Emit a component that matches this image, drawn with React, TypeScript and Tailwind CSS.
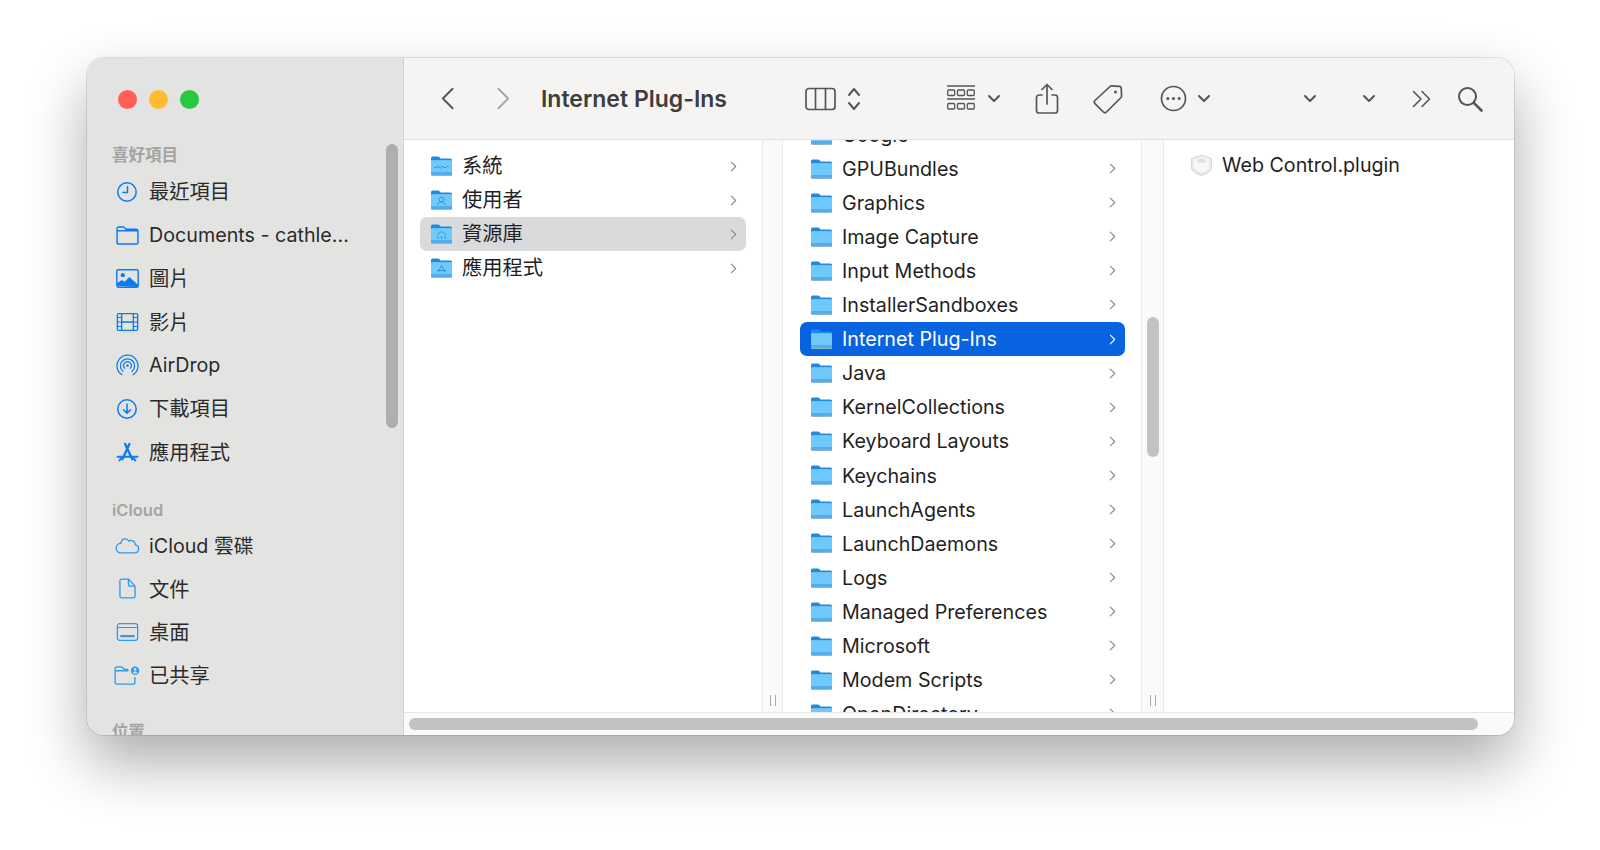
import type { ReactNode } from 'react';

const FONT = 'font-["Inter","Noto_Sans_CJK_TC",sans-serif]';

// CJK labels sit a little larger than latin ones in the reference
const labelSize = (label: string) => (/^[\u4e00-\u9fff]+$/.test(label) ? 'text-[20.3px]' : 'text-[19.7px]');

const Clock = () => (
    <svg viewBox="0 0 22 22" className="h-[22px] w-[22px]" fill="none" stroke="currentColor" strokeWidth="1.5">
        <circle cx="11" cy="11" r="9.2" />
        <path d="M11.5 5.5v6H7" strokeLinecap="round" strokeLinejoin="round" />
    </svg>
);

const FolderLine = () => (
    <svg viewBox="0 0 24 20" className="h-[19px] w-[23px]" fill="none" stroke="currentColor" strokeWidth="1.5">
        <path d="M1 5V3a2 2 0 0 1 2-2h5l2.5 2.5H21a2 2 0 0 1 2 2V17a2 2 0 0 1-2 2H3a2 2 0 0 1-2-2V5h22" strokeLinejoin="round" />
    </svg>
);

const Photo = () => (
    <svg viewBox="0 0 24 20" className="h-[19px] w-[23px]">
        <rect x="0.75" y="0.75" width="22.5" height="18.5" rx="1.5" fill="none" stroke="currentColor" strokeWidth="1.5" />
        <circle cx="7" cy="6.5" r="2.2" fill="currentColor" />
        <path d="M1 18v-3l5-3.5 3 2 5-5 9 8v2.5z" fill="currentColor" />
    </svg>
);

const Film = () => (
    <svg viewBox="0 0 24 20" className="h-[18px] w-[23px]" fill="none" stroke="currentColor">
        <rect x="0.75" y="0.75" width="22.5" height="18.5" rx="1.2" strokeWidth="1.5" />
        <path d="M5.5 1v18M18.5 1v18M5.5 10h13" strokeWidth="1.5" />
        <path d="M1 5h4.5M1 10h4.5M1 15h4.5M18.5 5H23M18.5 10H23M18.5 15H23" strokeWidth="1.2" />
    </svg>
);

const AirDrop = () => (
    <svg viewBox="0 0 24 24" className="h-[23px] w-[23px]" fill="none" stroke="currentColor" strokeWidth="1.3" strokeLinecap="round">
        <path d="M6 21.5a11 11 0 1 1 12 0" />
        <path d="M7.2 18a7.4 7.4 0 1 1 9.6 0" />
        <path d="M9 14.8a4 4 0 1 1 6 0" />
        <circle cx="12" cy="12" r="1.3" fill="currentColor" stroke="none" />
    </svg>
);

const Download = () => (
    <svg viewBox="0 0 22 22" className="h-[22px] w-[22px]" fill="none" stroke="currentColor" strokeWidth="1.5" strokeLinecap="round" strokeLinejoin="round">
        <circle cx="11" cy="11" r="9.2" />
        <path d="M11 6v9M7.5 11.8 11 15.3l3.5-3.5" />
    </svg>
);

const AppStore = () => (
    <svg viewBox="0 0 24 22" className="h-[21px] w-[23px]" fill="none" stroke="currentColor" strokeWidth="2.4" strokeLinecap="round">
        <path d="M9.5 2 17 18M14 2 6.6 18" />
        <path d="M1.6 15.4h20.8" strokeWidth="2" />
        <path d="m3.6 19.4 1.5-2M20.2 19.4l-1.5-2" strokeWidth="2" />
    </svg>
);

const Cloud = () => (
    <svg viewBox="0 0 26 18" className="h-[17px] w-[25px]" fill="none" stroke="currentColor" strokeWidth="1.4" strokeLinejoin="round">
        <path d="M6 16.8h14.5a4.3 4.3 0 0 0 .9-8.5C21.2 4.2 17 2.4 14.4 4.4 12.6 .6 6.6 1.2 6.2 6.6 3.4 6.7 1 8.8 1 11.6c0 3 2.2 5.2 5 5.2z" />
    </svg>
);

const Doc = () => (
    <svg viewBox="0 0 18 22" className="h-[21px] w-[17px]" fill="none" stroke="currentColor" strokeWidth="1.4" strokeLinejoin="round">
        <path d="M3 1h7l7 7.5V19a2 2 0 0 1-2 2H3a2 2 0 0 1-2-2V3a2 2 0 0 1 2-2z" />
        <path d="M10 1v5.5a2 2 0 0 0 2 2h5" />
    </svg>
);

const Desktop = () => (
    <svg viewBox="0 0 24 20" className="h-[18px] w-[23px]" fill="none" stroke="currentColor">
        <rect x="0.75" y="0.75" width="22.5" height="18.5" rx="2.5" strokeWidth="1.4" />
        <path d="M1 5h22" strokeWidth="1.2" />
        <path d="M4 14.5h16" strokeWidth="2.6" />
    </svg>
);

const Shared = () => (
    <svg viewBox="0 0 27 20" className="h-[19px] w-[26px]" fill="none" stroke="currentColor" strokeWidth="1.4" strokeLinejoin="round">
        <path d="M1 5V3a2 2 0 0 1 2-2h5l2.5 2.5H15M21.8 11.5V17a2 2 0 0 1-2 2H3a2 2 0 0 1-2-2V5h14" />
        <circle cx="22" cy="5" r="4.4" fill="currentColor" stroke="none" />
        <circle cx="22" cy="3.6" r="1.4" fill="#e3e3e2" stroke="none" />
        <path d="M19.6 8c.3-1.6 1.2-2.2 2.4-2.2s2.1.6 2.4 2.2z" fill="#e3e3e2" stroke="none" />
    </svg>
);

const favorites: [ReactNode, string][] = [
    [<Clock />, '最近項目'],
    [<FolderLine />, 'Documents - cathle...'],
    [<Photo />, '圖片'],
    [<Film />, '影片'],
    [<AirDrop />, 'AirDrop'],
    [<Download />, '下載項目'],
    [<AppStore />, '應用程式'],
];

const icloud: [ReactNode, string][] = [
    [<Cloud />, 'iCloud 雲碟'],
    [<Doc />, '文件'],
    [<Desktop />, '桌面'],
    [<Shared />, '已共享'],
];

const SidebarRow = ({ icon, label, tint }: { icon: ReactNode; label: string; tint: string }) => (
    <div className="flex h-[43.4px] items-center">
        <span className={`flex w-[30px] justify-center ${tint}`}>{icon}</span>
        <span className={`ml-[7px] mt-[2px] whitespace-nowrap text-[#2b2b2b] ${labelSize(label)}`}>{label}</span>
    </div>
);

const Folder = ({ glyph }: { glyph?: ReactNode }) => (
    <svg viewBox="0 0 23 22" className="h-[22px] w-[23px] shrink-0">
        <path d="M1 19.5V3a1.5 1.5 0 0 1 1.5-1.5h5.4c.6 0 1 .2 1.4.6l1.2 1.4h10A1.5 1.5 0 0 1 22 5v14.5z" fill="#1f8ae0" />
        <rect x="1" y="5.6" width="21" height="15.4" rx="1.2" fill="#b4b4b4" />
        <rect x="1" y="5.2" width="21" height="15" rx="1.2" fill="#6fc9fc" />
        <path d="M1 17h21v2a1.2 1.2 0 0 1-1.2 1.2H2.2A1.2 1.2 0 0 1 1 19z" fill="#54ace8" />
        {glyph}
    </svg>
);

const SysGlyph = (
    <path d="M4 12.5h3l1.2-1.5 2 2.5 2-2.5 1.3 1.5h2.5M16.5 11.5h2" fill="none" stroke="#2c86cf" strokeWidth="0.8" />
);
const UserGlyph = (
    <g fill="none" stroke="#2c86cf" strokeWidth="0.8">
        <circle cx="11.5" cy="10.5" r="2.4" />
        <path d="M7.5 16c.6-2 2.2-3 4-3s3.4 1 4 3" />
    </g>
);
const LibGlyph = (
    <path d="M7 11.5 11.5 8.5 16 11.5M8 13v3M11.5 13v3M15 13v3" fill="none" stroke="#2c86cf" strokeWidth="0.8" />
);
const AppGlyph = <path d="M11.5 8.5 8 15.5M11.5 8.5 15 15.5M7 13.5h9" fill="none" stroke="#2c86cf" strokeWidth="0.8" />;

const Chevron = ({ className }: { className: string }) => (
    <svg viewBox="0 0 8 12" className={`h-[11px] w-[7px] shrink-0 ${className}`} fill="none" stroke="currentColor" strokeWidth="1.3" strokeLinecap="round" strokeLinejoin="round">
        <path d="m1.5 1 5 5-5 5" />
    </svg>
);

const FileRow = ({ name, glyph, state }: { name: string; glyph?: ReactNode; state?: 'active' | 'muted' }) => {
    const bg = state === 'active' ? 'bg-[#0763e0] text-white' : state === 'muted' ? 'bg-[#d9dadb] text-[#1f1f1f]' : 'text-[#1f1f1f]';
    return (
        <div className={`flex h-[34.09px] items-center rounded-[7px] pl-[10px] pr-[9px] ${bg}`}>
            <Folder glyph={glyph} />
            <span className={`ml-[9px] flex-1 whitespace-nowrap ${glyph ? '' : 'mt-[2px]'} ${labelSize(name)}`}>{name}</span>
            <Chevron className={state === 'active' ? 'text-white' : 'text-[#8c8c8c]'} />
        </div>
    );
};

const Divider = ({ width }: { width: string }) => (
    <div className={`flex shrink-0 flex-col justify-end border-x border-[#eaeaea] bg-[#fafafa] pb-[6px] ${width}`}>
        <div className="flex justify-center gap-[4px]">
            <span className="h-[11px] w-px bg-[#a8a8a8]" />
            <span className="h-[11px] w-px bg-[#a8a8a8]" />
        </div>
    </div>
);

const Caret = ({ ml }: { ml: string }) => (
    <svg viewBox="0 0 14 9" className={`h-[9px] w-[14px] ${ml}`} fill="none" stroke="#555" strokeWidth="2" strokeLinecap="round" strokeLinejoin="round">
        <path d="m2 2 5 5 5-5" />
    </svg>
);

const Toolbar = () => (
    <div className="flex h-[82px] shrink-0 items-center border-b border-[#e3e2e0] bg-[#f5f4f2]">
        <svg viewBox="0 0 14 24" className="ml-[37px] h-[23px] w-[13px]" fill="none" stroke="#555" strokeWidth="2" strokeLinecap="round" strokeLinejoin="round">
            <path d="M12.5 1.5 2 12l10.5 10.5" />
        </svg>
        <svg viewBox="0 0 14 24" className="ml-[43px] h-[23px] w-[13px]" fill="none" stroke="#a6a6a6" strokeWidth="2" strokeLinecap="round" strokeLinejoin="round">
            <path d="M1.5 1.5 12 12 1.5 22.5" />
        </svg>
        <span className="ml-[31px] w-[187px] whitespace-nowrap pt-[1px] text-[23px] font-semibold text-[#3d3d3d]">Internet Plug-Ins</span>
        <svg viewBox="0 0 31 24" className="ml-[77px] h-[24px] w-[31px]" fill="none" stroke="#555" strokeWidth="1.7">
            <rect x="1" y="1.5" width="29" height="21" rx="3" />
            <path d="M10.5 1.5v21M20.5 1.5v21" />
        </svg>
        <svg viewBox="0 0 14 24" className="ml-[11px] h-[24px] w-[14px]" fill="none" stroke="#555" strokeWidth="2" strokeLinecap="round" strokeLinejoin="round">
            <path d="m2 8 5-6 5 6M2 16l5 6 5-6" />
        </svg>
        <svg viewBox="0 0 28 27" className="ml-[86px] h-[27px] w-[28px]" fill="none" stroke="#555" strokeWidth="1.3">
            <path d="M0 1h28M0 14h28" strokeWidth="1.5" />
            <rect x="0.7" y="5" width="7" height="5.5" rx="1" />
            <rect x="10.5" y="5" width="7" height="5.5" rx="1" />
            <rect x="20.3" y="5" width="7" height="5.5" rx="1" />
            <rect x="0.7" y="18.5" width="7" height="5.5" rx="1" />
            <rect x="10.5" y="18.5" width="7" height="5.5" rx="1" />
            <rect x="20.3" y="18.5" width="7" height="5.5" rx="1" />
        </svg>
        <Caret ml="ml-[12px]" />
        <svg viewBox="0 0 24 32" className="ml-[34px] h-[32px] w-[24px]" fill="none" stroke="#555" strokeWidth="1.7" strokeLinecap="round" strokeLinejoin="round">
            <path d="M7 12H4a2.5 2.5 0 0 0-2.5 2.5v13A2.5 2.5 0 0 0 4 30h16a2.5 2.5 0 0 0 2.5-2.5v-13A2.5 2.5 0 0 0 20 12h-3" />
            <path d="M12 21V2M7 6.5 12 1.5l5 5" />
        </svg>
        <svg viewBox="0 0 30 30" className="ml-[34px] h-[30px] w-[30px]" fill="none" stroke="#555" strokeWidth="1.7" strokeLinejoin="round">
            <path d="M17 2.5a2 2 0 0 1 1.5-.6l8 .4a1.8 1.8 0 0 1 1.7 1.7l.4 8a2 2 0 0 1-.6 1.5L13.5 28a2.2 2.2 0 0 1-3.1 0L2 19.6a2.2 2.2 0 0 1 0-3.1z" />
            <circle cx="22.5" cy="8" r="1.5" fill="#555" stroke="none" />
        </svg>
        <svg viewBox="0 0 27 27" className="ml-[37px] h-[27px] w-[27px]" fill="none" stroke="#555" strokeWidth="1.7">
            <circle cx="13.5" cy="13.5" r="12" />
            <circle cx="7.8" cy="13.5" r="1.5" fill="#555" stroke="none" />
            <circle cx="13.5" cy="13.5" r="1.5" fill="#555" stroke="none" />
            <circle cx="19.2" cy="13.5" r="1.5" fill="#555" stroke="none" />
        </svg>
        <Caret ml="ml-[10px]" />
        <Caret ml="ml-[92px]" />
        <Caret ml="ml-[45px]" />
        <svg viewBox="0 0 20 18" className="ml-[36px] h-[18px] w-[20px]" fill="none" stroke="#555" strokeWidth="1.6" strokeLinecap="round" strokeLinejoin="round">
            <path d="m1.5 1.5 7.5 7.5-7.5 7.5M10 1.5l7.5 7.5-7.5 7.5" />
        </svg>
        <svg viewBox="0 0 26 26" className="ml-[25px] h-[26px] w-[26px]" fill="none" stroke="#555" strokeWidth="2" strokeLinecap="round">
            <circle cx="10.5" cy="10.5" r="8.5" />
            <path d="m16.8 16.8 7.7 7.7" strokeWidth="2.6" />
        </svg>
    </div>
);

const Sidebar = () => (
    <aside className="relative w-[317px] shrink-0 overflow-hidden border-r border-[#d2d2d2] bg-[#e3e3e2] pl-[25px]">
        <div className="flex h-[82px] items-center gap-[12px] pl-[6px]">
            <span className="h-[19px] w-[19px] rounded-full bg-[#ff5f57]" />
            <span className="h-[19px] w-[19px] rounded-full bg-[#febc2e]" />
            <span className="h-[19px] w-[19px] rounded-full bg-[#28c840]" />
        </div>
        <div className="flex h-[30px] items-center text-[16.5px] font-semibold text-[#a3a3a3]">喜好項目</div>
        {favorites.map(([icon, label]) => (
            <SidebarRow key={label} icon={icon} label={label} tint="text-[#0a7bf0]" />
        ))}
        <div className="mt-[23px] flex h-[27px] items-center text-[16.5px] font-semibold text-[#a3a3a3]">iCloud</div>
        {icloud.map(([icon, label]) => (
            <SidebarRow key={label} icon={icon} label={label} tint="text-[#2f9be6]" />
        ))}
        <div className="mt-[20px] flex h-[30px] items-center text-[16.5px] font-semibold text-[#a3a3a3]">位置</div>
        <div className="absolute right-[5px] top-[86px] h-[284px] w-[12px] rounded-full bg-[#aeaeac]" />
    </aside>
);

const systemRows: [string, ReactNode][] = [
    ['系統', SysGlyph],
    ['使用者', UserGlyph],
    ['資源庫', LibGlyph],
    ['應用程式', AppGlyph],
];

const libraryRows = [
    'Google',
    'GPUBundles',
    'Graphics',
    'Image Capture',
    'Input Methods',
    'InstallerSandboxes',
    'Internet Plug-Ins',
    'Java',
    'KernelCollections',
    'Keyboard Layouts',
    'Keychains',
    'LaunchAgents',
    'LaunchDaemons',
    'Logs',
    'Managed Preferences',
    'Microsoft',
    'Modem Scripts',
    'OpenDirectory',
];

export default function App() {
    return (
        <div className={`h-[850px] w-[1600px] overflow-hidden bg-white pl-[87px] pt-[58px] ${FONT}`}>
            <div className="flex h-[677px] w-[1427px] overflow-hidden rounded-[17px] bg-white shadow-[0_28px_60px_rgba(0,0,0,0.33),0_0_0_1px_rgba(0,0,0,0.1)]">
                <Sidebar />
                <main className="flex min-w-0 flex-1 flex-col">
                    <Toolbar />
                    <div className="flex min-h-0 flex-1">
                        <div className="w-[358px] shrink-0 pl-[16px] pr-[16px] pt-[9px]">
                            {systemRows.map(([name, glyph]) => (
                                <FileRow key={name} name={name} glyph={glyph} state={name === '資源庫' ? 'muted' : undefined} />
                            ))}
                        </div>
                        <Divider width="w-[21px]" />
                        <div className="relative w-[358px] shrink-0 overflow-hidden pl-[17px] pr-[16px]">
                            <div className="-mt-[22.5px]">
                                {libraryRows.map((name) => (
                                    <FileRow key={name} name={name} state={name === 'Internet Plug-Ins' ? 'active' : undefined} />
                                ))}
                            </div>
                        </div>
                        <div className="relative flex shrink-0">
                            <Divider width="w-[23px]" />
                            <div className="absolute left-[6px] top-[177px] h-[140px] w-[12px] rounded-full bg-[#c2c2c0]" />
                        </div>
                        <div className="flex-1 pl-[26px] pt-[13px]">
                            <div className="flex h-[24px] items-center">
                                <svg viewBox="0 0 24 24" className="h-[24px] w-[23px]">
                                    <path d="M12 1.5 22.5 5.5v9c0 3.5-4 6.5-10.5 8.5C5.5 21 1.5 18 1.5 14.5v-9z" fill="#e8e8e8" stroke="#d6d6d6" />
                                    <path d="M12 3.5 20 6.5V14c0 2.500-3 4.500-8 6-5-1.500-8-3.500-8-6V6.500z" fill="#f7f7f7" />
                                    <ellipse cx="12" cy="7.5" rx="4.5" ry="2.3" fill="#e2e2e2" />
                                </svg>
                                <span className="ml-[9px] mt-[2px] whitespace-nowrap text-[19.7px] text-[#1f1f1f]">Web Control.plugin</span>
                            </div>
                        </div>
                    </div>
                    <div className="h-[23px] shrink-0 border-t border-[#e6e6e6] bg-[#fafafa] pl-[5px] pt-[5px]">
                        <div className="h-[12px] w-[1069px] rounded-full bg-[#c2c2c0]" />
                    </div>
                </main>
            </div>
        </div>
    );
}
